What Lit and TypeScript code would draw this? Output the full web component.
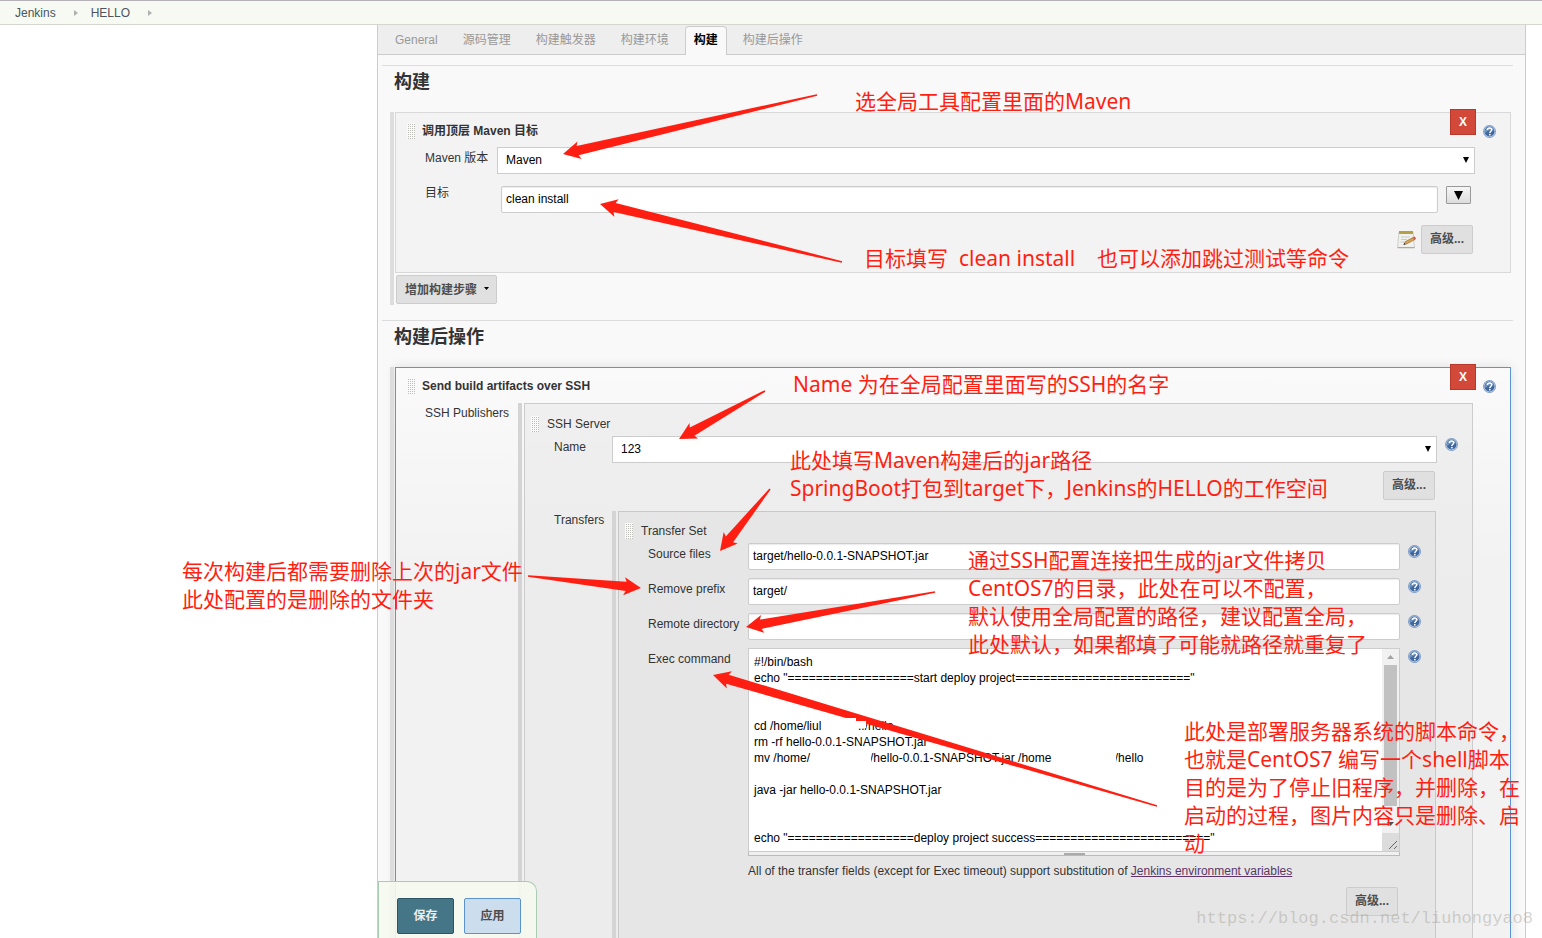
import { LitElement, html, svg, css } from "lit";
import { customElement, property } from "lit/decorators.js";

@customElement("help-icon")
class HelpIcon extends LitElement {
  static styles = css`
    :host { display: block; flex: none; width: 14px; height: 14px; }
    .help { display: block; width: 14px; height: 14px; padding: 0; border: 0; background: none; }
    .glyph { display: block; }
  `;
  render() {
    return html`<button class="help" type="button" aria-label="Help">
      <svg class="glyph" width="14" height="14" viewBox="0 0 14 14">
        <circle cx="6.500" cy="6.500" r="6.500" fill="#7d9cc6" />
        <circle cx="6.500" cy="6.500" r="5.600" fill="#c3d3e8" />
        <circle cx="6.500" cy="6.500" r="5" fill="#40689f" />
        <path d="M2 5.500A4.700 4.700 0 0 1 11 5.500Q6.500 4 2 8Z" fill="#6f92c2" />
        <path d="M4.400 5C4.500 3.500 5.400 2.900 6.600 2.900c1.300 0 2.200.7 2.200 1.800 0 1.500-2 1.600-2 3.300" fill="none" stroke="#fff" stroke-width="1.500" />
        <rect x="6" y="8.900" width="1.600" height="1.500" fill="#fff" />
      </svg>
    </button>`;
  }
}

@customElement("drag-handle")
class DragHandle extends LitElement {
  static styles = css`
    :host {
      display: block; flex: none; width: 8px; height: 16px;
      background-color: #fafafa;
      background-image:
        linear-gradient(#fafafa 1px, transparent 1px),
        linear-gradient(90deg, #fafafa 1px, #bcbcb8 1px);
      background-size: 2px 2px;
    }
  `;
  render() { return html``; }
}

interface Point { x: number; y: number; }

/** Tapered arrow: wide at the head, thin at the tail. */
function arrowPoints(tip: Point, tail: Point): string {
  const dx = tail.x - tip.x, dy = tail.y - tip.y;
  const len = Math.hypot(dx, dy);
  const ux = dx / len, uy = dy / len;
  const at = (along: number, side: number) =>
    `${(tip.x + ux * along - uy * side).toFixed(1)},${(tip.y + uy * along + ux * side).toFixed(1)}`;
  return [at(0, 0), at(17, 9), at(15, 4.7), at(len, 0.8), at(len, -0.8), at(15, -4.7), at(17, -9)].join(" ");
}

const ARROWS: [Point, Point][] = [
  [{ x: 563, y: 154 }, { x: 817, y: 95 }],
  [{ x: 600, y: 204 }, { x: 842, y: 262 }],
  [{ x: 679, y: 439 }, { x: 765, y: 391 }],
  [{ x: 720, y: 551 }, { x: 770, y: 489 }],
  [{ x: 641, y: 588 }, { x: 528, y: 576 }],
  [{ x: 746, y: 627 }, { x: 935, y: 592 }],
  [{ x: 713, y: 675 }, { x: 1157, y: 806 }],
];

interface Note { x: number; y: number; text: string; }

const NOTES: Note[] = [
  { x: 855, y: 87, text: "选全局工具配置里面的Maven" },
  { x: 864, y: 244, text: "目标填写  clean install    也可以添加跳过测试等命令" },
  { x: 793, y: 370, text: "Name 为在全局配置里面写的SSH的名字" },
  { x: 790, y: 446, text: "此处填写Maven构建后的jar路径\nSpringBoot打包到target下，Jenkins的HELLO的工作空间" },
  { x: 182, y: 557, text: "每次构建后都需要删除上次的jar文件\n此处配置的是删除的文件夹" },
  { x: 968, y: 546, text: "通过SSH配置连接把生成的jar文件拷贝\nCentOS7的目录，此处在可以不配置，\n默认使用全局配置的路径，建议配置全局，\n此处默认，如果都填了可能就路径就重复了" },
  { x: 1184, y: 717, text: "此处是部署服务器系统的脚本命令，\n也就是CentOS7 编写一个shell脚本\n目的是为了停止旧程序，并删除，在\n启动的过程，图片内容只是删除、启\n动" },
];

const SCRIPT = [
  "#!/bin/bash",
  'echo "==================start deploy project========================="',
  "",
  "",
  "cd /home/liul" + " ".repeat(11) + "../hello",
  "rm -rf hello-0.0.1-SNAPSHOT.jar",
  "mv /home/" + " ".repeat(18) + "/hello-0.0.1-SNAPSHOT.jar /home" + " ".repeat(19) + "/hello",
  "",
  "java -jar hello-0.0.1-SNAPSHOT.jar",
  "",
  "",
  'echo "==================deploy project success========================="',
].join("\n");

@customElement("app-root")
class AppRoot extends LitElement {
  @property() project = "HELLO";

  static styles = css`
    :host {
      display: flex; flex-direction: column; position: relative;
      height: 100vh; overflow: hidden; background: #fff; color: #333;
      font: 12px/16px "Liberation Sans", "Noto Sans CJK SC", sans-serif;
    }
    * { box-sizing: border-box; }
    button, input, select, textarea { font-family: inherit; font-size: 12px; margin: 0; border-radius: 0; }

    .crumbs {
      display: flex; align-items: center; flex: none; height: 25px; padding: 0 15px;
      background: #f6faf2; border-top: 1px solid #b5b0b5; border-bottom: 1px solid #d3d7cf;
    }
    .crumb { color: #4d545d; text-decoration: none; }
    .crumb-arrow { width: 4px; height: 6px; margin: 0 13px 0 18px; }

    .page { display: flex; flex: 1 0 auto; padding: 0 16px 0 377px; }
    .config { flex: 1; min-width: 0; background: #f9f9f9; border: solid #ccc; border-width: 0 1px; }
    .tabs { display: flex; gap: 7px; height: 30px; padding: 1px 8px 0; background: #eee; border-bottom: 1px solid #ccc; }
    .tab { height: 29px; padding: 5px 8px 0; border: 1px solid transparent; border-bottom: 0; color: #999; text-decoration: none; line-height: 16px; }
    .tab.active { color: #000; font-weight: bold; background: #f9f9f9; border-color: #ccc; border-radius: 4px 4px 0 0; }

    .section { margin: 10px 12px 15px 4px; border-top: 1px solid #ddd; }
    .section + .section { margin-top: 0; }
    .heading { margin: 4px 12px 18px; font-size: 18px; line-height: 24px; font-weight: bold; }
    .block { display: flex; gap: 1px; margin: 0 2px 0 8px; }
    .bar { flex: none; width: 4px; background: #ddd; }
    .bar.dim { background: #d4d4d4; margin-right: 1px; }
    .stack { flex: 1; min-width: 0; display: flex; flex-direction: column; align-items: flex-start; gap: 2px; }
    .box { width: 100%; border: 1px solid #d9d9d9; background: #f3f3f3; }
    .box.first { padding-bottom: 18px; }
    .box.moved { border-color: #5b95cd; background: linear-gradient(#fafafa, #f2f2f2 200px); box-shadow: 0 0 10px #ddd; }
    .box.server { border-color: #ccc; background: linear-gradient(#efefef, #ececec 200px); }
    .box.set { border-color: #c8c8c8; background: #e6e6e6; padding-bottom: 80px; }

    .head { display: flex; align-items: flex-start; gap: 7px; height: 34px; padding: 0 13px 0 11px; }
    .head drag-handle, .head .title { margin-top: 10px; }
    .head .title { flex: 1; font-weight: bold; }
    .head help-icon { margin-top: 12px; }
    .moved > .head { height: 35px; }
    .head.sub { gap: 8px; height: 32px; padding-left: 6px; }
    .head.sub drag-handle, .head.sub .title { margin-top: 12px; }
    .head.sub .title { font-weight: normal; }
    .head.deep { height: 31px; }
    .head.deep drag-handle, .head.deep .title { margin-top: 11px; }
    .delete { width: 26px; height: 26px; margin-top: -4px; padding: 0; color: #fff; font-weight: bold; background: #d24939; border: 1px solid #b8382b; }

    .row { display: grid; grid-template-columns: 72px minmax(0, 1fr); padding: 0 35px 0 29px; align-items: start; }
    .row .label { padding-top: 3px; white-space: nowrap; }
    .row.goal { margin-top: 8px; }
    .row.nested { grid-template-columns: 93px minmax(0, 1fr); padding-right: 37px; }
    .row.nested .label { padding-top: 2px; }
    .row.nested .row .label { padding-top: 3px; }
    .row.server-name { grid-template-columns: 58px minmax(0, 1fr) 14px; padding-right: 13px; }
    .row.transfers { grid-template-columns: 58px minmax(0, 1fr); padding-right: 36px; margin-top: 11px; }
    .row.nested .row.transfers > .label { padding-top: 1px; }
    .row.field { grid-template-columns: 100px minmax(0, 1fr) 14px; padding-right: 13px; margin-bottom: 8px; }
    .row.last { margin-bottom: 0; }
    .row help-icon { margin: 2px 0 0; }
    .with-help { margin-right: 8px; }
    .nest { display: flex; gap: 1px; }

    .picker { position: relative; }
    .select { display: block; appearance: none; width: 100%; height: 27px; padding: 0 8px 2px; background: #fff; border: 1px solid #ccc; color: #000; }
    .picker-arrow { position: absolute; right: 6px; top: 10px; pointer-events: none; }
    .text { display: block; width: 100%; height: 27px; padding: 0 4px 2px; background: #fff; border: 1px solid #ccc; border-radius: 2px; color: #000; box-shadow: inset 0 1px 1px #ececec; }
    .combo { display: flex; align-items: flex-start; gap: 8px; padding: 4px 4px 0; }
    .drop { display: grid; place-items: center; flex: none; width: 25px; height: 18px; padding: 0; background: linear-gradient(#f6f6f6, #ddd); border: 1px solid #999; border-radius: 1px; }

    .actions { display: flex; justify-content: flex-end; align-items: center; gap: 5px; padding: 0 37px; margin-top: 12px; }
    .actions.near { margin-top: 8px; }
    .btn { height: 29px; padding: 0 7px 5px; color: #4d4d4d; font-weight: bold; background: #e0e0e0; border: 1px solid #ccc; border-radius: 2px; white-space: nowrap; }
    .btn.add { display: flex; align-items: center; gap: 7px; margin: 0 0 1px 1px; padding: 0 7px 2px 8px; }
    .btn.advanced { width: 52px; padding-left: 0; padding-right: 0; }

    .editor { display: grid; grid-template-columns: minmax(0, 1fr) 17px; background: #fff; border: 1px solid #ccc; }
    .code { display: block; width: 100%; height: 202px; padding: 5px; border: 0; outline: 0; resize: none; overflow: hidden; background: #fff; color: #000; line-height: 16px; white-space: pre; }
    .scroll { display: flex; flex-direction: column; align-items: center; background: #f1f1f1; }
    .up { height: 16px; padding-top: 6px; }
    .thumb { width: 13px; height: 141px; background: #c1c1c1; }
    .down { flex: 1; padding-top: 16px; }
    .corner { width: 17px; height: 18px; background: #dcdcdc; }
    .glyph { display: block; }
    .grip { height: 4px; display: flex; justify-content: center; background: #f0f0f0; border: 1px solid #bbb; border-top: 0; }
    .grip-mark { width: 21px; height: 2px; margin-top: 1px; background: #aaa; }
    .hint { margin: 7px 29px 0 129px; }
    .link { color: #5c3566; text-decoration: underline; }

    .savebar { position: absolute; left: 378px; bottom: 0; display: flex; gap: 10px; height: 57px; padding: 16px 15px 0 18px; background: rgba(246, 250, 240, 0.9); border: 1px solid #a9cbb4; border-bottom: 0; border-top-right-radius: 10px; }
    .big { width: 57px; height: 36px; padding: 0 0 4px; border-radius: 2px; font-weight: bold; color: #4d4d4d; background: #ccdded; border: 1px solid #5b93cc; }
    .big.primary { color: #eee; background: #457687; border-color: #2b5363; }

    .overlay { position: absolute; left: 0; top: 0; pointer-events: none; }
    .note { position: absolute; margin: 0; color: #ff1f12; white-space: pre; font: 400 21px/28px "Noto Sans", "Noto Sans CJK SC", sans-serif; pointer-events: none; }
    .watermark { position: absolute; right: 9px; bottom: 7px; color: rgba(160, 160, 150, 0.45); font: 17px/24px "Liberation Mono", monospace; pointer-events: none; }
  `;

  private crumbArrow() {
    return html`<svg class="crumb-arrow" viewBox="0 0 4 6"><path d="M0 0L4 3L0 6Z" fill="#b0b0b0" /></svg>`;
  }

  private triangle(width: number, height: number, cls: string, fill = "#000") {
    return html`<svg class=${cls} width=${width} height=${height} viewBox="0 0 10 10" preserveAspectRatio="none"><path d="M0 0H10L5 10Z" fill=${fill} /></svg>`;
  }

  private select(id: string, value: string) {
    return html`<div class="picker">
      <select class="select" id=${id}><option>${value}</option></select>
      ${this.triangle(6, 6, "picker-arrow")}
    </div>`;
  }

  private field(id: string, label: string, value: string) {
    return html`<div class="row field">
      <label class="label" for=${id}>${label}</label>
      <div class="with-help"><input class="text" id=${id} .value=${value} /></div>
      <help-icon></help-icon>
    </div>`;
  }

  private mavenBlock() {
    return html`<div class="block">
      <div class="bar"></div>
      <div class="stack">
        <div class="box first">
          <div class="head">
            <drag-handle></drag-handle><span class="title">调用顶层 Maven 目标</span>
            <button class="delete" type="button">X</button><help-icon></help-icon>
          </div>
          <div class="row">
            <label class="label" for="maven">Maven 版本</label>
            ${this.select("maven", "Maven")}
          </div>
          <div class="row goal">
            <label class="label" for="goal">目标</label>
            <div class="combo">
              <input class="text" id="goal" .value=${"clean install"} />
              <button class="drop" type="button" aria-label="Expand">${this.triangle(9, 9, "glyph")}</button>
            </div>
          </div>
          <div class="actions">
            <svg class="glyph" width="19" height="19" viewBox="0 0 19 19">
              <path d="M2 2H16L17.500 18H0.500Z" fill="#f1f1ee" stroke="#c4c4c0" stroke-width=".8" />
              <path d="M1 17.500H17.500" stroke="#aaa" />
              <path d="M2 1H16V4H2Z" fill="#c9b458" />
              <path d="M3 1V4M5 1V4M7 1V4M9 1V4M11 1V4M13 1V4M15 1V4" stroke="#8f7d2c" stroke-width=".7" />
              <path d="M4 7H13M4 9.500H10M3.500 12H8" stroke="#c9ccd0" />
              <path d="M7 14.500L8.500 11.500L16 7.500L17.500 9.800L9.800 13.800Z" fill="#d9a050" stroke="#8f6425" stroke-width=".6" />
              <path d="M16 7.300L17.800 6.500L19 8.800L17.400 9.900Z" fill="#d9534a" />
              <path d="M6.300 15L7.400 12.800L8.600 14.400Z" fill="#444" />
            </svg>
            <button class="btn advanced" type="button">高级...</button>
          </div>
        </div>
        <button class="btn add" type="button">增加构建步骤 ${this.triangle(5, 3, "glyph")}</button>
      </div>
    </div>`;
  }

  private transferSet() {
    return html`<div class="nest">
      <div class="bar dim"></div>
      <div class="box set">
        <div class="head sub deep"><drag-handle></drag-handle><span class="title">Transfer Set</span></div>
        ${this.field("source", "Source files", "target/hello-0.0.1-SNAPSHOT.jar")}
        ${this.field("prefix", "Remove prefix", "target/")}
        ${this.field("remote", "Remote directory", "")}
        <div class="row field last">
          <label class="label" for="exec">Exec command</label>
          <div class="with-help">
            <div class="editor">
              <textarea class="code" id="exec" spellcheck="false" .value=${SCRIPT}></textarea>
              <div class="scroll">
                <div class="up"><svg class="glyph" width="7" height="4" viewBox="0 0 7 4"><path d="M0 4L3.500 0L7 4Z" fill="#a3a3a3" /></svg></div>
                <div class="thumb"></div>
                <div class="down">${this.triangle(7, 4, "glyph", "#505050")}</div>
                <div class="corner"><svg class="glyph" width="17" height="18" viewBox="0 0 17 18"><path d="M7 16L15 8M12 16L15 13" stroke="#666" /></svg></div>
              </div>
            </div>
            <div class="grip"><div class="grip-mark"></div></div>
          </div>
          <help-icon></help-icon>
        </div>
        <p class="hint">All of the transfer fields (except for Exec timeout) support substitution of <a class="link" href="#env">Jenkins environment variables</a></p>
        <div class="actions near"><button class="btn advanced" type="button">高级...</button></div>
      </div>
    </div>`;
  }

  private sshBlock() {
    return html`<div class="block">
      <div class="bar"></div>
      <div class="stack">
        <div class="box moved">
          <div class="head">
            <drag-handle></drag-handle><span class="title">Send build artifacts over SSH</span>
            <button class="delete" type="button">X</button><help-icon></help-icon>
          </div>
          <div class="row nested">
            <span class="label">SSH Publishers</span>
            <div class="nest">
              <div class="bar dim"></div>
              <div class="box server">
                <div class="head sub"><drag-handle></drag-handle><span class="title">SSH Server</span></div>
                <div class="row server-name">
                  <label class="label" for="server">Name</label>
                  <div class="with-help">${this.select("server", "123")}</div>
                  <help-icon></help-icon>
                </div>
                <div class="actions near"><button class="btn advanced" type="button">高级...</button></div>
                <div class="row transfers">
                  <span class="label">Transfers</span>
                  ${this.transferSet()}
                </div>
              </div>
            </div>
          </div>
        </div>
      </div>
    </div>`;
  }

  render() {
    const tabs = ["General", "源码管理", "构建触发器", "构建环境", "构建", "构建后操作"];
    return html`
      <nav class="crumbs">
        <a class="crumb" href="#home">Jenkins</a>${this.crumbArrow()}
        <a class="crumb" href="#project">${this.project}</a>${this.crumbArrow()}
      </nav>
      <div class="page">
        <main class="config">
          <nav class="tabs">
            ${tabs.map((t) => html`<a class="tab ${t === "构建" ? "active" : ""}" href="#tab">${t}</a>`)}
          </nav>
          <section class="section"><h2 class="heading">构建</h2>${this.mavenBlock()}</section>
          <section class="section"><h2 class="heading">构建后操作</h2>${this.sshBlock()}</section>
        </main>
      </div>
      <div class="savebar">
        <button class="big primary" type="button">保存</button>
        <button class="big" type="button">应用</button>
      </div>
      <svg class="overlay" width="1542" height="938" viewBox="0 0 1542 938">
        ${ARROWS.map(([tip, tail]) => svg`<polygon points=${arrowPoints(tip, tail)} fill="#ff1f12" />`)}
        <path d="M821 718H856V721H866V728H821ZM860 750H871V765H860ZM1104 752H1116V765H1104Z" fill="#fff" />
      </svg>
      ${NOTES.map((n) => html`<p class="note" style="left:${n.x}px;top:${n.y}px">${n.text}</p>`)}
      <div class="watermark">https://blog.csdn.net/liuhongyao8</div>
    `;
  }
}
